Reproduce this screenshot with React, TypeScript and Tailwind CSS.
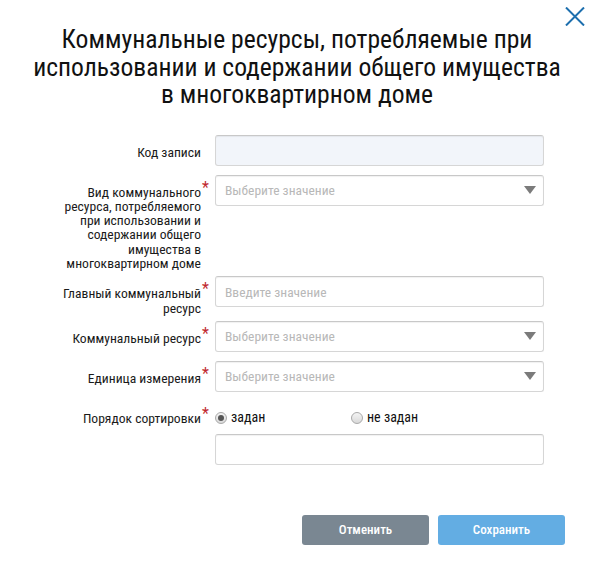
import React from "react";

const Star = () => (
  <span className="absolute right-[-1px] top-[5px] text-[16px] leading-none text-[#c0282d]">*</span>
);

function Label({ text, req }: { text: React.ReactNode; req?: boolean }) {
  return (
    <div className="relative w-[208px] shrink-0 pr-[7px] pt-[10px] text-right text-[13.6px] leading-[14.3px] text-[#1a1a1a]">
      {text}
      {req && <Star />}
    </div>
  );
}

function Input({ placeholder, disabled }: { placeholder?: string; disabled?: boolean }) {
  return (
    <div
      className={`flex h-[31px] w-[329px] items-center rounded-[3px] border border-[#d6d6d6] border-t-[#c8c8c8] px-[9px] text-[13.5px] text-[#b8b8b8] shadow-[inset_0_1px_1px_rgba(0,0,0,0.06)] ${
        disabled ? "bg-[#f2f5fa]" : "bg-white"
      }`}
    >
      {placeholder}
    </div>
  );
}

function Select({ placeholder }: { placeholder: string }) {
  return (
    <div className="flex h-[31px] w-[329px] items-center justify-between rounded-[3px] border border-[#d6d6d6] border-t-[#c8c8c8] bg-white pl-[9px] pr-[7px] text-[13.5px] text-[#b8b8b8] shadow-[inset_0_1px_1px_rgba(0,0,0,0.06)]">
      <span>{placeholder}</span>
      <svg width="12" height="8" viewBox="0 0 12 8">
        <path d="M0 0 H12 L6 8 Z" fill="#7b7b7b" />
      </svg>
    </div>
  );
}

function Radio({ checked }: { checked?: boolean }) {
  return (
    <span className="flex h-[12px] w-[12px] items-center justify-center rounded-full border border-[#a9a9a9] bg-gradient-to-b from-[#f4f4f4] to-[#d9d9d9]">
      {checked && <span className="h-[6px] w-[6px] rounded-full bg-[#555]" />}
    </span>
  );
}

export default function App() {
  return (
    <div
      className="relative h-[563px] w-[594px] overflow-hidden bg-white"
      style={{ fontFamily: "Roboto, 'Liberation Sans', sans-serif", fontStretch: "condensed" }}
    >
      <button className="absolute right-[9px] top-[7px]" aria-label="close">
        <svg width="20" height="19" viewBox="0 0 20 19">
          <path d="M1 0.5 L19 18.5 M19 0.5 L1 18.5" stroke="#1d6fae" strokeWidth="2" />
        </svg>
      </button>

      <h1 className="pt-[26px] text-center text-[25.6px] leading-[27.5px] font-normal text-[#111]">
        Коммунальные ресурсы, потребляемые при
        <br />
        использовании и содержании общего имущества
        <br />в многоквартирном доме
      </h1>

      <div className="mt-[26px] flex flex-col">
        <div className="flex gap-[7px]">
          <Label text="Код записи" />
          <Input disabled />
        </div>

        <div className="mt-[9px] flex gap-[7px]">
          <Label
            req
            text={
              <>
                Вид коммунального
                <br />
                ресурса, потребляемого
                <br />
                при использовании и
                <br />
                содержании общего
                <br />
                имущества в
                <br />
                многоквартирном доме
              </>
            }
          />
          <Select placeholder="Выберите значение" />
        </div>

        <div className="mt-[6px] flex gap-[7px]">
          <Label
            req
            text={
              <>
                Главный коммунальный
                <br />
                ресурс
              </>
            }
          />
          <Input placeholder="Введите значение" />
        </div>

        <div className="mt-[6px] flex gap-[7px]">
          <Label req text="Коммунальный ресурс" />
          <Select placeholder="Выберите значение" />
        </div>

        <div className="mt-[9px] flex gap-[7px]">
          <Label req text="Единица измерения" />
          <Select placeholder="Выберите значение" />
        </div>

        <div className="mt-[9px] flex h-[33px] gap-[7px]">
          <Label req text="Порядок сортировки" />
          <div className="flex items-center pt-[1px] text-[14px] text-[#111]">
            <label className="flex w-[136px] items-center gap-[4px]">
              <Radio checked />
              <span>задан</span>
            </label>
            <label className="flex items-center gap-[4px]">
              <Radio />
              <span>не задан</span>
            </label>
          </div>
        </div>

        <div className="flex">
          <div className="w-[215px] shrink-0" />
          <Input />
        </div>
      </div>

      <div className="mt-[50px] flex justify-end gap-[9px] pr-[29px]">
        <button className="h-[30px] w-[127px] rounded-[3px] bg-[#7a8792] text-[13px] font-medium text-white">
          Отменить
        </button>
        <button className="h-[30px] w-[127px] rounded-[3px] bg-[#63ade3] text-[13px] font-medium text-white">
          Сохранить
        </button>
      </div>
    </div>
  );
}
